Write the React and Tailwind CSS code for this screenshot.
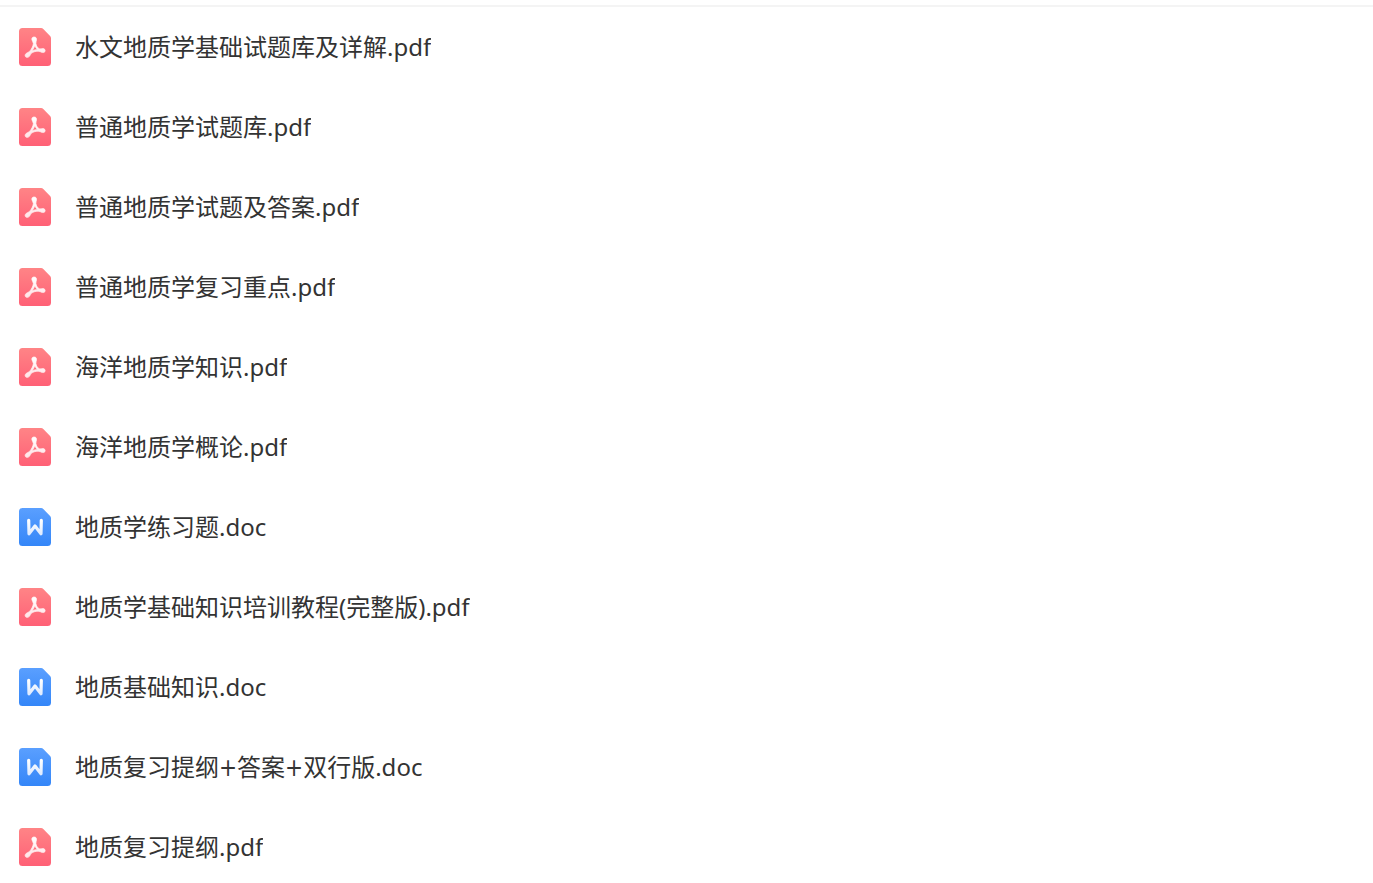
const files = [
  '水文地质学基础试题库及详解.pdf',
  '普通地质学试题库.pdf',
  '普通地质学试题及答案.pdf',
  '普通地质学复习重点.pdf',
  '海洋地质学知识.pdf',
  '海洋地质学概论.pdf',
  '地质学练习题.doc',
  '地质学基础知识培训教程(完整版).pdf',
  '地质基础知识.doc',
  '地质复习提纲+答案+双行版.doc',
  '地质复习提纲.pdf',
];

const sheet =
  'M3.5 0H22.2Q23.4 0 24.3 .9L31.1 8.1Q32 9 32 10.2V34.5Q32 38 28.5 38H3.5Q0 38 0 34.5V3.5Q0 0 3.5 0Z';

function PdfIcon() {
  return (
    <svg className="h-[38px] w-8 shrink-0" viewBox="0 0 32 38" aria-hidden="true">
      <defs>
        <linearGradient id="pdf-fill" x1="0" y1="0" x2="0" y2="1">
          <stop offset="0" stopColor="#ff8486" />
          <stop offset="1" stopColor="#ff6076" />
        </linearGradient>
        <linearGradient id="pdf-mark" x1="0" y1="0" x2="0" y2="1">
          <stop offset="0" stopColor="#ffffff" />
          <stop offset="1" stopColor="#ffe4e7" />
        </linearGradient>
      </defs>
      <path d={sheet} fill="url(#pdf-fill)" />
      <path
        fillRule="evenodd"
        fill="url(#pdf-mark)"
        stroke="url(#pdf-mark)"
        strokeWidth=".7"
        strokeLinejoin="round"
        d="M15.1 9C16.9 9 17.7 10.2 17.5 11.7C17.3 13.1 16.8 14.2 16.9 15.6C17.3 17.8 18.4 19.4 20 20.8C21.4 21.2 22.8 20.5 24.2 20.6C25.6 20.8 26.3 21.9 26.1 23C25.9 24.3 24.6 24.8 23.4 24.5C21.9 24.1 20.7 23.3 19.1 23.2C16.5 23.2 14.7 23.9 12.5 25.1C11.5 26.2 11.2 27.6 10.2 28.6C9.1 29.6 7.5 29.7 6.6 28.8C5.7 27.8 6.1 26.4 7.1 25.5C8.2 24.6 9.6 24.3 10.6 23.4C12.5 21 13.9 18.5 14.4 15.7C14.3 14.2 13.3 13.2 12.9 11.7C12.6 10.2 13.4 9 15.1 9ZM15.8 17.7C15.1 19.7 14.2 21.2 13.1 22.8C14.8 22 16.6 21.6 18.4 21.5C17.3 20.4 16.4 19.2 15.8 17.7Z"
      />
    </svg>
  );
}

function DocIcon() {
  return (
    <svg className="h-[38px] w-8 shrink-0" viewBox="0 0 32 38" aria-hidden="true">
      <defs>
        <linearGradient id="doc-fill" x1="0" y1="0" x2="0" y2="1">
          <stop offset="0" stopColor="#5a9fff" />
          <stop offset="1" stopColor="#3486f8" />
        </linearGradient>
        <linearGradient id="doc-mark" x1="0" y1="0" x2="0" y2="1">
          <stop offset="0" stopColor="#ffffff" />
          <stop offset="1" stopColor="#dfecff" />
        </linearGradient>
      </defs>
      <path d={sheet} fill="url(#doc-fill)" />
      <path
        d="M9.7 12.4L10 25.8L16 18L22 25.8L22.3 12.4"
        fill="none"
        stroke="url(#doc-mark)"
        strokeWidth="3.2"
        strokeLinecap="round"
        strokeLinejoin="round"
      />
    </svg>
  );
}

function FileName({ name }) {
  const parts = name.split('+');
  return (
    <span className="truncate">
      {parts.map((part, i) => (
        <span key={i}>
          {i > 0 && <span className="font-['DejaVu_Sans_Condensed','DejaVu_Sans',sans-serif]">+</span>}
          {part}
        </span>
      ))}
    </span>
  );
}

export default function App() {
  return (
    <main className="bg-white pt-[5px] font-['Noto_Sans','Noto_Sans_CJK_SC',sans-serif] text-2xl text-[#333333]">
      <ul className="border-t-2 border-[#f4f4f4]">
        {files.map((name) => (
          <li key={name}>
            <a href="#" className="flex h-20 items-center gap-6 px-[19px]">
              {name.endsWith('.pdf') ? <PdfIcon /> : <DocIcon />}
              <FileName name={name} />
            </a>
          </li>
        ))}
      </ul>
    </main>
  );
}
